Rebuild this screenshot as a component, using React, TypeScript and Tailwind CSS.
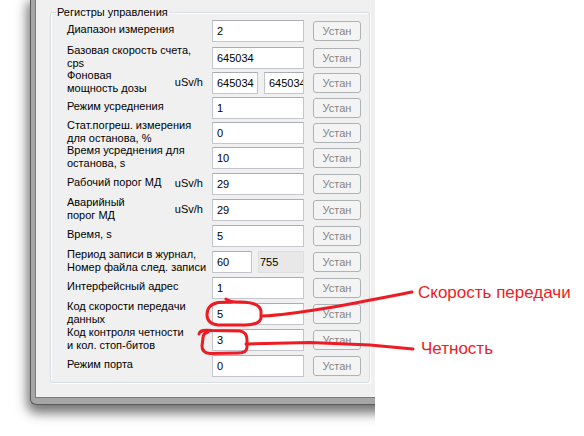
import React from 'react';

type Field = { w: string; text: string; ro?: boolean };
type Row = { mt: string; label: string[]; unit?: string; fields: Field[] };

const W = 'w-[92px]';

const rows: Row[] = [
  { mt: 'mt-[1px]', label: ['Диапазон измерения'], fields: [{ w: W, text: '2' }] },
  { mt: 'mt-[5px]', label: ['Базовая скорость счета,', 'cps'], fields: [{ w: W, text: '645034' }] },
  { mt: 'mt-[3px]', label: ['Фоновая', 'мощность дозы'], unit: 'uSv/h', fields: [{ w: 'w-[46px]', text: '645034' }, { w: 'w-[40px]', text: '645034' }] },
  { mt: 'mt-[3px]', label: ['Режим усреднения'], fields: [{ w: W, text: '1' }] },
  { mt: 'mt-[3px]', label: ['Стат.погреш. измерения', 'для останова, %'], fields: [{ w: W, text: '0' }] },
  { mt: 'mt-[3px]', label: ['Время усреднения для', 'останова, s'], fields: [{ w: W, text: '10' }] },
  { mt: 'mt-[4px]', label: ['Рабочий порог МД'], unit: 'uSv/h', fields: [{ w: W, text: '29' }] },
  { mt: 'mt-[4px]', label: ['Аварийный', 'порог МД'], unit: 'uSv/h', fields: [{ w: W, text: '29' }] },
  { mt: 'mt-[4px]', label: ['Время, s'], fields: [{ w: W, text: '5' }] },
  { mt: 'mt-[4px]', label: ['Период записи в журнал,', 'Номер файла след. записи'], fields: [{ w: 'w-[40px]', text: '60' }, { w: 'w-[46px]', text: '755', ro: true }] },
  { mt: 'mt-[4px]', label: ['Интерфейсный адрес'], fields: [{ w: W, text: '1' }] },
  { mt: 'mt-[4px]', label: ['Код скорости передачи', 'данных'], fields: [{ w: W, text: '5' }] },
  { mt: 'mt-[4px]', label: ['Код контроля четности', 'и кол. стоп-битов'], fields: [{ w: W, text: '3' }] },
  { mt: 'mt-[4px]', label: ['Режим порта'], fields: [{ w: W, text: '0' }] },
];

function FieldBox({ f }: { f: Field }) {
  if (f.ro) {
    return (
      <div className={`${f.w} h-[22px] bg-[#e8e8e8] border border-[#dedede] pl-[1px] flex items-center overflow-hidden whitespace-nowrap text-black`}>
        {f.text}
      </div>
    );
  }
  return (
    <div className={`${f.w} h-[22px] bg-white border border-[#c3c7cd] border-t-[#abadb3] pl-[4px] flex items-center overflow-hidden whitespace-nowrap text-black`}>
      {f.text}
    </div>
  );
}

function RowView({ r }: { r: Row }) {
  return (
    <div className={`${r.mt} flex items-center h-[22px]`}>
      <div className="w-[145px] pr-[9px] pb-[3px] flex items-center justify-between leading-[12.5px] text-black">
        <div className="flex flex-col whitespace-nowrap">
          {r.label.map((l, i) => (
            <span key={i}>{l}</span>
          ))}
        </div>
        {r.unit && <span className="whitespace-nowrap pt-[1px]">{r.unit}</span>}
      </div>
      <div className="w-[92px] flex gap-[6px]">
        {r.fields.map((f, i) => (
          <FieldBox key={i} f={f} />
        ))}
      </div>
      <div className="ml-[9px] w-[48px] h-[20px] rounded-[3px] border border-[#adb2b5] bg-[#f4f4f4] text-[#838383] flex items-center justify-center">
        Устан
      </div>
    </div>
  );
}

export default function App() {
  return (
    <div className="relative w-[584px] h-[436px] bg-white flex overflow-hidden font-['Liberation_Sans',Arial,sans-serif] text-[11px]">
      <div className="w-[375px] h-[436px] shrink-0 overflow-hidden">
        <div className="ml-[30px] w-[380px] h-[405px] flex border-l border-b border-[#5c5c5c] rounded-bl-[6px] bg-[#a6a6a6] pl-[4px] pb-[6px] shadow-[0_5px_12px_3px_rgba(0,0,0,0.55)]">
          <div className="flex-1 border-l border-b border-[#7a7a7a] bg-[#f0f0f0]">
            <fieldset className="ml-[14px] mt-[5px] w-[320px] min-w-0 border border-[#d5dfe5] rounded-[3px] pl-[16px] pb-[5px] shadow-[inset_1px_1px_0_#ffffff,1px_1px_0_#ffffff]">
              <legend className="ml-[-11px] px-[1px] leading-[14px] text-black">Регистры управления</legend>
              {rows.map((r, i) => (
                <RowView key={i} r={r} />
              ))}
            </fieldset>
          </div>
        </div>
      </div>
      <div className="flex-1 flex flex-col pt-[282px] pl-[43px] text-[17px] leading-[21px] text-[#ed1c24] whitespace-nowrap">
        <span>Скорость передачи</span>
        <span className="mt-[35px] ml-[3px]">Четность</span>
      </div>
      <svg className="absolute left-0 top-0 pointer-events-none" width="584" height="436" viewBox="0 0 584 436" fill="none">
        <g stroke="#ed1c24" strokeWidth="3" strokeLinecap="round" strokeLinejoin="round">
          <path d="M226,299 C228,301 232,302 240,302 C252,302 260,305 261,311 L261,318 C260,323 255,324.5 245,325 L218,325 C210,324 207,320 207,315 C207,308 210,304 218,302.5 L232,302" />
          <path d="M262,316 C300,314 350,304 412,292" />
          <path d="M199,334 C200,330 205,330 212,330.5 L240,331 C246,332 247,336 247,340 L247,347 C247,351 244,353 238,353 L210,353.5 C204,353 202,350 202,346 L203,338 C203,335 205,333 208,332" />
          <path d="M246,344 L310,342.5 L370,345 L413,349" />
        </g>
      </svg>
    </div>
  );
}
